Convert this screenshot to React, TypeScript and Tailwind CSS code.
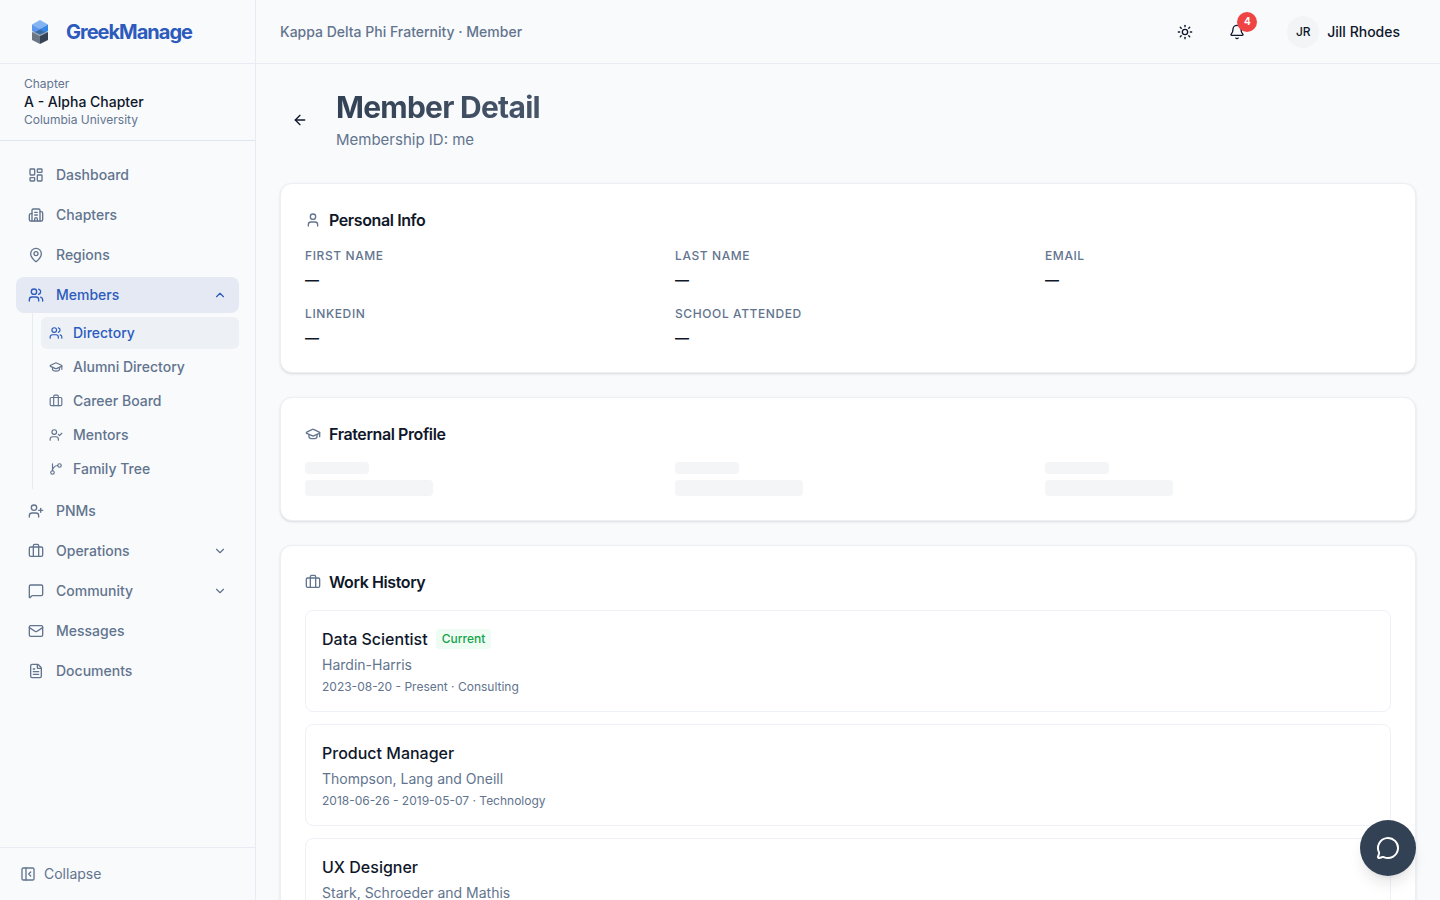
import React from 'react';
import {
  ArrowLeft, Bell, Briefcase, Building2, ChevronDown, ChevronUp, FileText,
  GraduationCap, LayoutDashboard, Mail, MapPin, MessageCircle, MessageSquare,
  PanelLeftClose, Sun, User, UserCheck, UserPlus, Users,
} from 'lucide-react';

type IconType = React.ComponentType<{ size?: number; className?: string }>;

type NavItem = {
  label: string;
  icon: IconType;
  active?: boolean;
  expandable?: boolean;
  children?: { label: string; icon: IconType; active?: boolean }[];
};

const BranchIcon: IconType = ({ size = 24, className }) => (
  <svg
    width={size}
    height={size}
    viewBox="0 0 24 24"
    fill="none"
    stroke="currentColor"
    strokeWidth="2"
    strokeLinecap="round"
    strokeLinejoin="round"
    className={className}
    aria-hidden="true"
  >
    <path d="M15 6a9 9 0 0 0-9 9V3" />
    <circle cx="18" cy="6" r="3" />
    <circle cx="6" cy="18" r="3" />
  </svg>
);

const navItems: NavItem[] = [
  { label: 'Dashboard', icon: LayoutDashboard },
  { label: 'Chapters', icon: Building2 },
  { label: 'Regions', icon: MapPin },
  {
    label: 'Members',
    icon: Users,
    active: true,
    expandable: true,
    children: [
      { label: 'Directory', icon: Users, active: true },
      { label: 'Alumni Directory', icon: GraduationCap },
      { label: 'Career Board', icon: Briefcase },
      { label: 'Mentors', icon: UserCheck },
      { label: 'Family Tree', icon: BranchIcon },
    ],
  },
  { label: 'PNMs', icon: UserPlus },
  { label: 'Operations', icon: Briefcase, expandable: true },
  { label: 'Community', icon: MessageSquare, expandable: true },
  { label: 'Messages', icon: Mail },
  { label: 'Documents', icon: FileText },
];

const personalInfo = ['First Name', 'Last Name', 'Email', 'LinkedIn', 'School Attended'];

const jobs = [
  { title: 'Data Scientist', company: 'Hardin-Harris', meta: '2023-08-20 - Present · Consulting', current: true },
  { title: 'Product Manager', company: 'Thompson, Lang and Oneill', meta: '2018-06-26 - 2019-05-07 · Technology' },
  { title: 'UX Designer', company: 'Stark, Schroeder and Mathis' },
];

const Logo: React.FC = () => (
  <svg viewBox="0 0 16 24" className="h-6 w-4 shrink-0" aria-hidden="true">
    <path d="M0 12 8 8l8 4-8 4z" fill="#94a3b8" />
    <path d="M0 12l8 4v8l-8-4z" fill="#6b7684" />
    <path d="M16 12l-8 4v8l8-4z" fill="#364356" />
    <path d="M8 0l8 4.5L8 9 0 4.5z" fill="#82b4f2" />
    <path d="M0 4.500l8 4.500v5.500L0 11z" fill="#5d97ee" />
    <path d="M16 4.500L8 9v5.500l8-3.500z" fill="#3486e4" />
    <path d="M8 9.500l5 2.500-5 2.500-5-2.500z" fill="#3b6a9c" />
  </svg>
);

const NavEntry: React.FC<{ item: NavItem }> = ({ item }) => {
  const Icon = item.icon;
  const Chevron = item.children ? ChevronUp : ChevronDown;
  const className = `flex h-9 w-full items-center gap-3 rounded-lg px-3 text-sm font-medium ${
    item.active ? 'bg-[#e4e9f4] text-[#2c5bbd]' : 'text-slate-500'
  }`;

  return (
    <li>
      {item.expandable ? (
        <button type="button" aria-expanded={!!item.children} className={className}>
          <Icon size={16} className="shrink-0" />
          <span className="flex-1 text-left">{item.label}</span>
          <Chevron size={14} className="shrink-0" />
        </button>
      ) : (
        <a href="#" className={className}>
          <Icon size={16} className="shrink-0" />
          {item.label}
        </a>
      )}
      {item.children && (
        <ul className="ml-4 space-y-0.5 border-l border-[#e8ecf2] py-1 pl-2">
          {item.children.map(({ label, icon: ChildIcon, active }) => (
            <li key={label}>
              <a
                href="#"
                className={`flex h-8 items-center gap-2.5 rounded-md px-2 text-sm font-medium ${
                  active ? 'bg-[#edf1f6] text-[#2c5bbd]' : 'text-slate-500'
                }`}
              >
                <ChildIcon size={14} className="shrink-0" />
                {label}
              </a>
            </li>
          ))}
        </ul>
      )}
    </li>
  );
};

const Sidebar: React.FC = () => (
  <aside className="flex w-64 shrink-0 flex-col border-r border-[#e8ecf2]">
    <div className="flex h-16 shrink-0 items-center gap-[18px] border-b border-[#e8ecf2] px-8">
      <Logo />
      <span className="text-xl font-bold tracking-tighter text-[#2c5bbd]">GreekManage</span>
    </div>

    <div className="border-b border-[#dfe5ef] px-6 py-3 text-xs text-slate-500">
      <p>Chapter</p>
      <p className="text-sm font-medium text-[#0f172a]">A - Alpha Chapter</p>
      <p>Columbia University</p>
    </div>

    <nav className="flex-1 overflow-y-auto p-4">
      <ul className="space-y-1">
        {navItems.map((item) => (
          <NavEntry key={item.label} item={item} />
        ))}
      </ul>
    </nav>

    <div className="border-t border-[#e8ecf2] p-2">
      <button type="button" className="flex h-9 w-full items-center gap-2 px-3 text-sm text-slate-500">
        <PanelLeftClose size={16} />
        Collapse
      </button>
    </div>
  </aside>
);

const Header: React.FC = () => (
  <header className="flex h-16 shrink-0 items-center justify-between border-b border-[#e8ecf2] px-6">
    <p className="text-sm font-medium text-slate-500">Kappa Delta Phi Fraternity · Member</p>
    <div className="flex items-center gap-4 text-[#0f172a]">
      <button type="button" aria-label="Toggle theme" className="flex size-9 items-center justify-center">
        <Sun size={16} />
      </button>
      <button type="button" aria-label="Notifications" className="relative flex size-9 items-center justify-center">
        <Bell size={16} />
        <span className="absolute -top-0.5 -right-0.5 flex size-5 items-center justify-center rounded-full bg-[#ef4444] text-[10px] font-bold text-white">
          4
        </span>
      </button>
      <button type="button" className="ml-4 flex items-center gap-2 pr-4 text-sm font-medium">
        <span className="flex size-8 items-center justify-center rounded-full bg-[#f3f4f6] text-xs">JR</span>
        Jill Rhodes
      </button>
    </div>
  </header>
);

const Card: React.FC<{ title: string; icon: IconType; children: React.ReactNode }> = ({ title, icon: Icon, children }) => (
  <section className="rounded-xl border border-[#eceff4] bg-white p-6 shadow-sm">
    <h2 className="flex items-center gap-2 font-semibold tracking-tight text-[#0f172a]">
      <Icon size={16} className="text-slate-500" />
      {title}
    </h2>
    {children}
  </section>
);

export default function App() {
  return (
    <div className="flex h-screen overflow-hidden bg-[#f9fafc] font-['Inter',sans-serif]">
      <Sidebar />
      <div className="flex min-w-0 flex-1 flex-col">
        <Header />
        <main className="flex-1 space-y-6 overflow-y-auto p-6 [scrollbar-width:none]">
          <div className="flex items-center gap-4 pb-2">
            <button type="button" aria-label="Go back" className="flex size-10 items-center justify-center text-[#0f172a]">
              <ArrowLeft size={16} />
            </button>
            <div>
              <h1 className="bg-gradient-to-r from-[#334155] to-[#475569] bg-clip-text text-3xl leading-[38px] font-bold tracking-tight text-transparent">
                Member Detail
              </h1>
              <p className="mt-[3px] text-[15px] leading-[22px] text-slate-500">Membership ID: me</p>
            </div>
          </div>

          <Card title="Personal Info" icon={User}>
            <dl className="mt-4 grid grid-cols-3 gap-x-6 gap-y-4">
              {personalInfo.map((label) => (
                <div key={label}>
                  <dt className="text-xs font-medium tracking-wider text-slate-500 uppercase">{label}</dt>
                  <dd className="mt-1.5 text-sm font-semibold text-[#0f172a]">—</dd>
                </div>
              ))}
            </dl>
          </Card>

          <Card title="Fraternal Profile" icon={GraduationCap}>
            <div className="mt-4 grid grid-cols-3 gap-x-6">
              {[0, 1, 2].map((n) => (
                <div key={n} className="space-y-1.5">
                  <div className="h-3 w-16 rounded bg-[#f4f5f7]" />
                  <div className="h-4 w-32 rounded bg-[#f4f5f7]" />
                </div>
              ))}
            </div>
          </Card>

          <Card title="Work History" icon={Briefcase}>
            <ul className="mt-4 space-y-3">
              {jobs.map((job) => (
                <li key={job.title} className="rounded-lg border border-[#eef1f6] p-4">
                  <div className="flex items-center gap-2">
                    <h3 className="font-medium text-[#0f172a]">{job.title}</h3>
                    {job.current && (
                      <span className="rounded bg-[#effcf4] px-1.5 py-0.5 text-xs font-medium text-[#16a34a]">Current</span>
                    )}
                  </div>
                  <p className="mt-1 text-sm text-slate-500">{job.company}</p>
                  {job.meta && <p className="mt-1 text-xs text-slate-500">{job.meta}</p>}
                </li>
              ))}
            </ul>
          </Card>
        </main>
      </div>

      <button
        type="button"
        aria-label="Open chat"
        className="fixed right-6 bottom-6 flex size-14 items-center justify-center rounded-full bg-[#334155] text-white shadow-lg"
      >
        <MessageCircle size={24} />
      </button>
    </div>
  );
}
